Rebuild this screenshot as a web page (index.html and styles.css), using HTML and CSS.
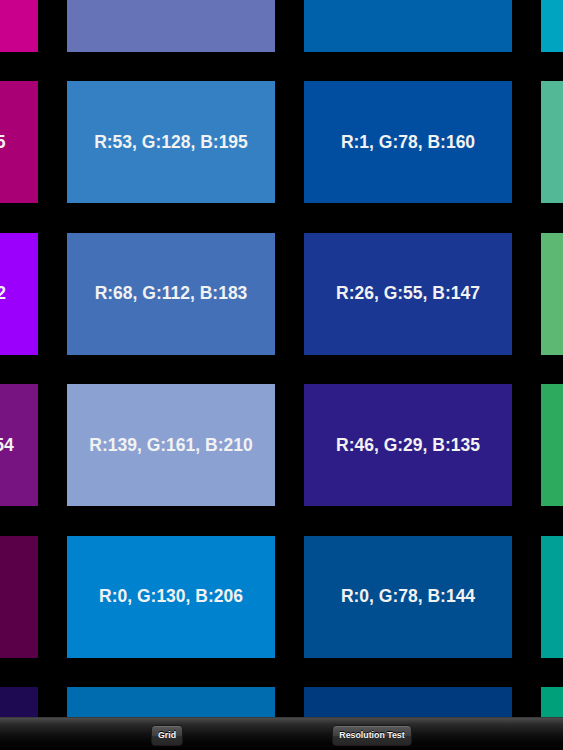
FILE: index.html
```html
<!DOCTYPE html>
<html>
<head>
<meta charset="utf-8">
<link rel="stylesheet" href="styles.css">
</head>
<body>
<div class="app">
  <main class="viewport">
    <div class="grid">
      <div class="tile" style="background:#c8008c"></div>
      <div class="tile" style="background:#6674b7"></div>
      <div class="tile" style="background:#0061ab"></div>
      <div class="tile" style="background:#00a3c0"></div>

      <div class="tile" style="background:#aa0075"><span>R:170, G:0, B:115</span></div>
      <div class="tile" style="background:rgb(53,128,195)"><span>R:53, G:128, B:195</span></div>
      <div class="tile" style="background:rgb(1,78,160)"><span>R:1, G:78, B:160</span></div>
      <div class="tile" style="background:#52b896"></div>

      <div class="tile" style="background:#9a00fc"><span>R:154, G:0, B:252</span></div>
      <div class="tile" style="background:rgb(68,112,183)"><span>R:68, G:112, B:183</span></div>
      <div class="tile" style="background:rgb(26,55,147)"><span>R:26, G:55, B:147</span></div>
      <div class="tile" style="background:#5cb872"></div>

      <div class="tile" style="background:#781482"><span class="shift">R:120, G:20, B:154</span></div>
      <div class="tile" style="background:rgb(139,161,210)"><span>R:139, G:161, B:210</span></div>
      <div class="tile" style="background:rgb(46,29,135)"><span>R:46, G:29, B:135</span></div>
      <div class="tile" style="background:#2eaa5e"></div>

      <div class="tile" style="background:#5a0048"></div>
      <div class="tile" style="background:rgb(0,130,206)"><span>R:0, G:130, B:206</span></div>
      <div class="tile" style="background:rgb(0,78,144)"><span>R:0, G:78, B:144</span></div>
      <div class="tile" style="background:#00a096"></div>

      <div class="tile" style="background:#1e0a52"></div>
      <div class="tile" style="background:#006cb0"></div>
      <div class="tile" style="background:#003a7e"></div>
      <div class="tile" style="background:#00a07a"></div>
    </div>
  </main>
  <footer class="toolbar">
    <button class="btn btn-grid">Grid</button>
    <button class="btn btn-res">Resolution Test</button>
  </footer>
</div>
</body>
</html>
```

FILE: styles.css
```css
html, body {
  margin: 0;
  padding: 0;
  background: #000;
}

.app {
  width: 563px;
  height: 750px;
  display: flex;
  flex-direction: column;
  overflow: hidden;
  background: #000;
  font-family: "Liberation Sans", Arial, sans-serif;
}

.viewport {
  flex: 1;
  overflow: hidden;
}

.grid {
  display: grid;
  grid-template-columns: repeat(4, 208px);
  grid-auto-rows: 122px;
  column-gap: 29px;
  row-gap: 29.5px;
  margin-left: -170px;
  margin-top: -70.5px;
  width: 919px;
}

.tile {
  display: flex;
  align-items: center;
  justify-content: center;
}

.tile span {
  color: #f2f2f2;
  font-weight: bold;
  font-size: 17.5px;
  white-space: nowrap;
}

.tile span.shift {
  margin-left: 6px;
}

.toolbar {
  height: 33px;
  flex: none;
  display: flex;
  align-items: center;
  padding-left: 151px;
  gap: 149px;
  box-sizing: border-box;
  padding-top: 2px;
  background: linear-gradient(to bottom, #4c4c4c 0px, #2c2c2c 6px, #111 16px, #050505 24px, #000 33px);
  border-top: 1px solid #3a3a3a;
}

.btn {
  height: 21px;
  padding: 0;
  border-radius: 4px;
  border: 1px solid #1a1a1a;
  background: linear-gradient(to bottom, #5a5a5a 0%, #3f3f3f 50%, #2e2e2e 51%, #262626 100%);
  color: #f4f4f4;
  font-family: "Liberation Sans", Arial, sans-serif;
  font-weight: bold;
  font-size: 8.8px;
  text-shadow: 0 -1px 0 #000;
  box-shadow: inset 0 1px 0 rgba(255,255,255,0.12);
}

.btn-grid {
  width: 32px;
}

.btn-res {
  width: 80px;
}
```
